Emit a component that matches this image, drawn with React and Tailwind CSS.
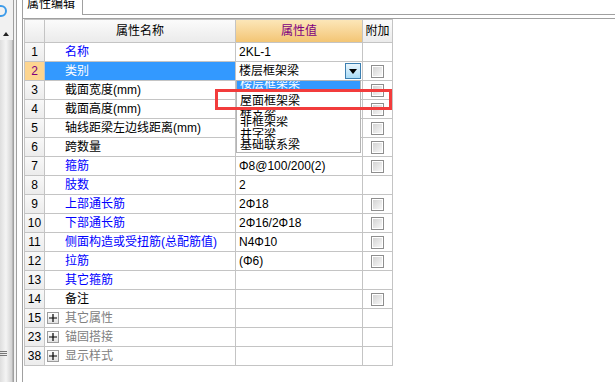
import React from 'react';

const rows = [
    { n: '1', name: '名称', tone: 'blue', value: '2KL-1' },
    { n: '2', name: '类别', selected: true, value: '楼层框架梁', combo: true, check: true },
    { n: '3', name: '截面宽度(mm)', tone: 'black', check: true },
    { n: '4', name: '截面高度(mm)', tone: 'black', check: true },
    { n: '5', name: '轴线距梁左边线距离(mm)', tone: 'black', check: true },
    { n: '6', name: '跨数量', tone: 'black', check: true },
    { n: '7', name: '箍筋', tone: 'blue', value: 'Φ8@100/200(2)', check: true },
    { n: '8', name: '肢数', tone: 'blue', value: '2' },
    { n: '9', name: '上部通长筋', tone: 'blue', value: '2Φ18', check: true },
    { n: '10', name: '下部通长筋', tone: 'blue', value: '2Φ16/2Φ18', check: true },
    { n: '11', name: '侧面构造或受扭筋(总配筋值)', tone: 'blue', value: 'N4Φ10', check: true },
    { n: '12', name: '拉筋', tone: 'blue', value: '(Φ6)', check: true },
    { n: '13', name: '其它箍筋', tone: 'blue' },
    { n: '14', name: '备注', tone: 'black', check: true },
    { n: '15', name: '其它属性', tone: 'gray', group: true },
    { n: '23', name: '锚固搭接', tone: 'gray', group: true },
    { n: '38', name: '显示样式', tone: 'gray', group: true },
];

const toneClass = {
    blue: 'text-[#0000ff]',
    black: 'text-black',
    gray: 'text-[#808080]',
};

const CheckBox = () => (
    <div className="w-[13px] h-[13px] border border-[#8e8e8e] bg-white p-[1px]">
        <div className="w-full h-full bg-gradient-to-br from-[#d4d4d4] to-[#f7f7f7]" />
    </div>
);

const PlusBox = () => (
    <div className="w-[12px] h-[12px] border border-[#9c9c9c] bg-gradient-to-b from-white to-[#e2e2e2] flex items-center justify-center">
        <svg width="8" height="8" viewBox="0 0 8 8">
            <path d="M0 4h8M4 0v8" stroke="#000" strokeWidth="1.2" />
        </svg>
    </div>
);

const ComboButton = () => (
    <div className="w-[16px] h-[16px] border border-[#3c7fb1] bg-gradient-to-b from-[#eaf6fd] to-[#a9dbf6] flex items-center justify-center">
        <svg width="8" height="5" viewBox="0 0 8 5">
            <path d="M0 0h8L4 5z" fill="#000" />
        </svg>
    </div>
);

const DropItem = ({ top, h, shift, text, selected }) => (
    <div
        className={`absolute left-0 right-0 overflow-hidden ${selected ? 'bg-[#3399ff] text-white' : 'bg-white text-black'}`}
        style={{ top, height: h }}
    >
        <div className="pl-[3px] text-[12px] leading-[12px] whitespace-nowrap" style={{ marginTop: shift }}>
            {text}
        </div>
    </div>
);

export default function App() {
    return (
        <div className="relative w-[615px] h-[382px] overflow-hidden bg-white flex font-['Liberation_Sans','Noto_Sans_CJK_SC',sans-serif] text-[12px]">
            {/* left dock strip */}
            <div className="w-[13px] h-full flex flex-col bg-[#f1f1f1]">
                <div className="relative h-[40px]">
                    <svg className="absolute left-0 top-[4px]" width="9" height="14" viewBox="0 0 9 14">
                        <circle cx="1" cy="7" r="5" fill="none" stroke="#3d9be9" strokeWidth="2" />
                    </svg>
                    <svg className="absolute left-[3px] top-[32px]" width="6" height="4" viewBox="0 0 6 4">
                        <path d="M0 4h6L3 0z" fill="#222" />
                    </svg>
                </div>
                <div className="flex-1 flex flex-col justify-end pb-[26px] bg-gradient-to-r from-[#dedede] via-[#f4f4f4] to-[#d2d2d2] border-r border-[#b8b8b8]">
                    <div className="flex flex-col gap-[1px] w-[7px]">
                        <div className="h-[1px] bg-[#777]" />
                        <div className="h-[1px] bg-[#777]" />
                        <div className="h-[1px] bg-[#777]" />
                    </div>
                </div>
            </div>
            <div className="w-[4px] h-full border-l border-r border-[#a0a0a0] bg-[#f4f4f4]" />
            <div className="w-[5px] h-full bg-white" />

            {/* property editor panel */}
            <div className="flex-1 h-full flex flex-col border-l border-[#a0a0a0]">
                <div className="h-[15px] flex">
                    <div className="w-[60px] h-full overflow-hidden border-r border-[#a0a0a0] bg-white">
                        <div className="pl-[4px] -mt-[3px] leading-[14px] text-black">属性编辑</div>
                    </div>
                    <div className="flex-1 border-b border-[#a0a0a0]" />
                </div>
                <div className="h-[3px]" />
                <div className="flex-1 border-t border-[#a0a0a0]">
                    <div className="ml-[1px] w-[369px] border-l border-t border-[#c4c4c4]">
                        {/* header */}
                        <div className="flex h-[23px] border-b border-[#c4c4c4]">
                            <div className="w-[20px] border-r border-[#c4c4c4] bg-gradient-to-b from-[#fbfbfb] to-[#ebebeb]" />
                            <div className="w-[191px] border-r border-[#c4c4c4] bg-gradient-to-b from-[#fbfbfb] to-[#ebebeb] flex items-center justify-center text-black">
                                属性名称
                            </div>
                            <div className="w-[127px] border-r border-[#c4c4c4] bg-gradient-to-b from-[#fce6b8] to-[#f3c574] flex items-center justify-center text-[#800080]">
                                属性值
                            </div>
                            <div className="w-[30px] border-r border-[#c4c4c4] bg-gradient-to-b from-[#fbfbfb] to-[#ebebeb] flex items-center justify-center text-black whitespace-nowrap overflow-hidden">
                                附加
                            </div>
                        </div>

                        {rows.map((r) => (
                            <div key={r.n} className="flex h-[19px] border-b border-[#c4c4c4]">
                                <div
                                    className={`w-[20px] border-r border-[#c4c4c4] flex items-center justify-center font-['Liberation_Sans',sans-serif] ${
                                        r.selected ? 'bg-[#fdd590] text-[#800080]' : 'bg-gradient-to-b from-[#f8f8f8] to-[#ececec] text-black'
                                    }`}
                                >
                                    {r.n}
                                </div>
                                <div
                                    className={`w-[191px] border-r border-[#c4c4c4] flex items-center whitespace-nowrap overflow-hidden ${
                                        r.selected ? 'bg-[#3399ff] text-white' : toneClass[r.tone]
                                    } ${r.group ? 'pl-[2px] gap-[6px]' : 'pl-[20px]'}`}
                                >
                                    {r.group && <PlusBox />}
                                    <span>{r.name}</span>
                                </div>
                                <div className="w-[127px] border-r border-[#c4c4c4] flex items-center justify-between pl-[3px] pr-[1px] text-black whitespace-nowrap">
                                    <span>{r.value}</span>
                                    {r.combo && <ComboButton />}
                                </div>
                                <div className="w-[30px] border-r border-[#c4c4c4] flex items-center justify-center">
                                    {r.check && <CheckBox />}
                                </div>
                            </div>
                        ))}
                    </div>
                </div>
            </div>

            {/* open drop-down list of 类别 */}
            <div className="absolute left-[236px] top-[80px] w-[125px] h-[73px] border border-[#b4b4b4] bg-white">
                <DropItem top={0} h={11} shift={-3} text="楼层框架梁" selected />
                <DropItem top={13} h={13} shift={1} text="屋面框架梁" />
                <DropItem top={26} h={10} shift={1} text="框支梁" />
                <DropItem top={35} h={12} shift={0} text="非框架梁" />
                <DropItem top={47} h={10} shift={0} text="井字梁" />
                <DropItem top={57} h={14} shift={1} text="基础联系梁" />
            </div>

            {/* highlight box */}
            <div className="absolute left-[215px] top-[89px] w-[177px] h-[21px] border-[3px] border-[#f23c3c]" />
        </div>
    );
}
